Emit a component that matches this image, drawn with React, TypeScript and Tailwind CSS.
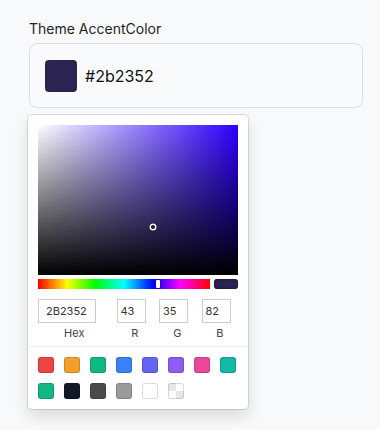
import React from "react";

const swatches: string[] = [
  "#EF4444",
  "#F59E2B",
  "#10B981",
  "#3B82F6",
  "#6366F1",
  "#8B5CF6",
  "#EC4899",
  "#14B8A6",
  "#10B981",
  "#111827",
  "#4A4A4A",
  "#9B9B9B",
  "#FFFFFF",
  "transparent",
];

function Field({ value, label, hex }: { value: string; label: string; hex?: boolean }) {
  return (
    <div className={hex ? "w-[72.5px]" : "w-[42.5px] pl-[6px]"}>
      <div
        className={
          "h-[24px] border border-[#cccccc] flex items-center text-[11px] text-[#333] " +
          (hex ? "w-[58px] pl-[7px]" : "w-[29px] pl-[3px]")
        }
      >
        {value}
      </div>
      <div className="pt-[4px] leading-[13px] text-[11px] text-[#444] text-center">{label}</div>
    </div>
  );
}

export default function App() {
  return (
    <div
      className="min-h-screen bg-[#f8f9fb] px-[29px] pt-[19px]"
      style={{ fontFamily: "Inter, 'Noto Sans', sans-serif" }}
    >
      <div className="text-[14px] leading-[20px] text-[#1f1f1f]">Theme AccentColor</div>
      <div className="relative w-[334px] mt-[4px]">
        <div className="h-[65px] rounded-[8px] border border-[#dcdee2] bg-[#f9fafb] flex items-center pl-[15px] gap-[8px]">
          <div className="w-[32px] h-[32px] rounded-[4px] bg-[#2b2352]" />
          <span className="text-[16px] text-[#111]">#2b2352</span>
        </div>

        <div className="absolute left-[-1px] top-[72px] w-[220px] bg-white rounded-[4px] px-[10px] pt-[10px] shadow-[0_0_0_1px_rgba(0,0,0,0.12),0_8px_16px_rgba(0,0,0,0.12)]">
          <div className="relative w-[200px] h-[150px] bg-[#2b00ff] bg-[linear-gradient(to_top,#000,rgba(0,0,0,0)),linear-gradient(to_right,#fff,rgba(255,255,255,0))]">
            <div className="absolute left-[112.6px] top-[99.8px] w-[4px] h-[4px] rounded-full shadow-[0_0_0_1.5px_#fff,inset_0_0_1px_1px_rgba(0,0,0,0.3),0_0_1px_2px_rgba(0,0,0,0.4)]" />
          </div>
          <div className="mt-[4px] flex gap-[4px]">
            <div className="relative w-[172px] h-[10px] bg-[linear-gradient(to_right,#f00_0%,#ff0_17%,#0f0_33%,#0ff_50%,#00f_67%,#f0f_83%,#f00_100%)]">
              <div className="absolute left-[117.5px] top-[1px] w-[4px] h-[8px] rounded-[1px] bg-white shadow-[0_0_2px_rgba(0,0,0,0.6)]" />
            </div>
            <div className="w-[24px] h-[10px] rounded-[3px] bg-[#2b2352] shadow-[inset_0_0_0_1px_rgba(0,0,0,0.15),inset_0_0_4px_rgba(0,0,0,0.25)]" />
          </div>
          <div className="mt-[10px] flex pb-[6px]">
            <Field value="2B2352" label="Hex" hex />
            <Field value="43" label="R" />
            <Field value="35" label="G" />
            <Field value="82" label="B" />
          </div>
          <div className="-mx-[10px] h-px bg-[#eeeeee]" />
          <div className="grid grid-cols-[repeat(8,16px)] gap-[10px] pt-[10px] pb-[10px]">
            {swatches.map((c, i) =>
              c === "transparent" ? (
                <div
                  key={i}
                  className="w-[16px] h-[16px] rounded-[3px] bg-[conic-gradient(#fff_0_25%,#e6e6e6_0_50%,#fff_0_75%,#e6e6e6_0)] shadow-[inset_0_0_0_1px_rgba(0,0,0,0.15)]"
                />
              ) : (
                <div
                  key={i}
                  className="w-[16px] h-[16px] rounded-[3px] shadow-[inset_0_0_0_1px_rgba(0,0,0,0.15)]"
                  style={{ backgroundColor: c }}
                />
              )
            )}
          </div>
        </div>
      </div>
    </div>
  );
}
